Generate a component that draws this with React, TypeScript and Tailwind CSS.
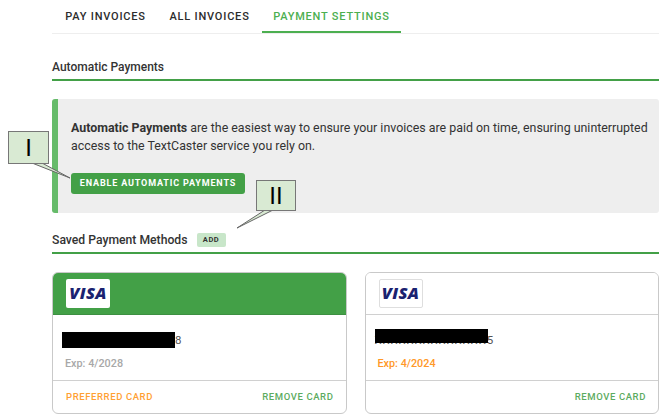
function VisaBadge({ outlined }: { outlined?: boolean }) {
  return (
    <div className={`flex h-[29px] w-[44px] items-center justify-center rounded-[2px] bg-white ${outlined ? "border border-[#dedede]" : ""}`}>
      <span className="font-['Open_Sans',sans-serif] text-[16.5px] leading-none font-extrabold tracking-[0.3px] text-[#1a2270] italic">VISA</span>
    </div>
  );
}

function Callout({ label, className, tail }: { label: string; className: string; tail: string }) {
  return (
    <div className={`absolute z-10 ${className}`}>
      <svg width="120" height="80" viewBox="0 0 120 80" fill="none" className="absolute top-0 left-0 overflow-visible">
        <path d={tail} fill="#d9ead3" stroke="#666" strokeWidth="1" />
      </svg>
      <div className="relative flex h-full w-full items-center justify-center border border-[#777] bg-[#d9ead3] font-['Liberation_Sans',sans-serif] text-[24px] leading-none text-black">
        {label}
      </div>
    </div>
  );
}

function Card({
  preferred,
  digit,
  exp,
  expired,
}: {
  preferred?: boolean;
  digit: string;
  exp: string;
  expired?: boolean;
}) {
  return (
    <div className="h-[142px] w-[295px] overflow-hidden rounded-[6px] border border-[#c9c9c9] bg-white">
      <div className={`flex h-[42px] items-center border-b pl-[13px] ${preferred ? "border-[#3d8f42] bg-[#43a047]" : "border-[#d0d0d0] bg-white"}`}>
        <VisaBadge outlined={!preferred} />
      </div>
      <div className="relative h-[66px] border-b border-[#d0d0d0] pl-[13px]">
        {preferred ? (
          <>
            <div className="absolute top-[17px] left-[9px] h-[16px] w-[113px] bg-black" />
            <span className="absolute top-[18px] left-[122px] text-[11.5px] leading-[14px] text-[#555]">{digit}</span>
          </>
        ) : (
          <>
            <span className="absolute top-[18px] left-[9px] text-[11.5px] leading-[14px] tracking-[0.8px] whitespace-nowrap text-[#555]">XXXXXXXXXXXXXX{digit}</span>
            <div className="absolute top-[14px] left-[9px] h-[14px] w-[113px] bg-black" />
          </>
        )}
        <p className={`absolute top-[42px] left-[12px] text-[10.8px] leading-[14px] font-medium ${expired ? "text-[#ff9827]" : "text-[#a8a8a8]"}`}>
          {exp}
        </p>
      </div>
      <div className="flex h-[32px] items-center justify-between pr-[12px] pl-[13px] text-[9.5px] font-medium tracking-[0.6px] uppercase">
        <span className="text-[#ffa033]">{preferred ? "Preferred Card" : ""}</span>
        <span className="text-[#5cab60]">Remove Card</span>
      </div>
    </div>
  );
}

export default function App() {
  return (
    <div className="relative h-[420px] w-[664px] overflow-hidden bg-white pr-[5px] pl-[52px] font-['Roboto',sans-serif] text-[#222]">
      <nav className="flex h-[34px] border-b border-[#eeeeee] pl-[14px] text-[11px] font-medium tracking-[0.8px] uppercase">
        <div className="mr-[25px] flex w-[79px] items-center justify-center pt-[1px] whitespace-nowrap text-[#2c2c2c]">Pay Invoices</div>
        <div className="mr-[13px] flex w-[79px] items-center justify-center pt-[1px] whitespace-nowrap text-[#2c2c2c]">All Invoices</div>
        <div className="flex w-[139px] items-center justify-center border-b-2 border-[#4caf50] pt-[3px] whitespace-nowrap text-[#4caf50]">Payment Settings</div>
      </nav>

      <h2 className="mt-[25px] border-b-2 border-[#43a047] pb-[3px] text-[12px] leading-[17px] font-medium text-[#333]">Automatic Payments</h2>

      <section className="mt-[18px] h-[114px] rounded-[3px] border-l-[6px] border-[#66bb6a] bg-[#eeeeee] pt-[20px] pl-[13px]">
        <p className="text-[12.4px] leading-[18px] text-[#333]">
          <span className="font-bold">Automatic Payments</span> are the easiest way to ensure your invoices are paid on time, ensuring uninterrupted
          <br />
          access to the TextCaster service you rely on.
        </p>
        <button className="mt-[18px] flex h-[21px] w-[174px] items-center justify-center rounded-[3px] bg-[#43a047] text-[9px] font-bold tracking-[0.85px] text-white uppercase">
          Enable Automatic Payments
        </button>
      </section>

      <div className="mt-[18px] flex h-[23px] items-start gap-[9px] border-b-2 border-[#43a047]">
        <h2 className="text-[12.2px] leading-[18px] font-medium text-[#333]">Saved Payment Methods</h2>
        <span className="mt-[2px] flex h-[14px] w-[29px] items-center justify-center rounded-[2px] bg-[#c8e6c9] text-[7.5px] font-bold tracking-[0.5px] text-[#333] uppercase">Add</span>
      </div>

      <div className="mt-[18px] flex gap-[18px]">
        <Card preferred digit="8" exp="Exp: 4/2028" />
        <Card digit="5" exp="Exp: 4/2024" expired />
      </div>

      <Callout label="I" className="top-[131px] left-[8px] h-[33px] w-[41px]" tail="M 34 32 L 62 47 L 24 32 Z" />
      <Callout label="II" className="top-[180px] left-[256px] h-[31px] w-[40px]" tail="M 9 30 L -19 48 L 17 30 Z" />
    </div>
  );
}
